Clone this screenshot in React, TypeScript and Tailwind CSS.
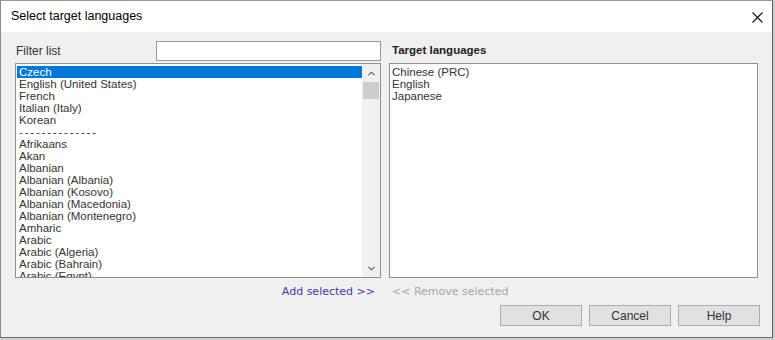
import { ChevronDown, ChevronUp } from 'lucide-react'

const sourceLangs = [
  'Czech',
  'English (United States)',
  'French',
  'Italian (Italy)',
  'Korean',
  '--------------',
  'Afrikaans',
  'Akan',
  'Albanian',
  'Albanian (Albania)',
  'Albanian (Kosovo)',
  'Albanian (Macedonia)',
  'Albanian (Montenegro)',
  'Amharic',
  'Arabic',
  'Arabic (Algeria)',
  'Arabic (Bahrain)',
  'Arabic (Egypt)',
]

const targetLangs = ['Chinese (PRC)', 'English', 'Japanese']

export default function App() {
  return (
    <div className="w-[775px] h-[340px] bg-[#cdcdcd] font-['Liberation_Sans',Arial,sans-serif] text-[#222] overflow-hidden">
      <div className="w-[773px] h-[338px] flex flex-col bg-[#f0f0f0] border-l border-l-[#8a8a8a] border-r border-r-[#5a5a5a] border-b border-b-[#707070] border-t border-t-[#9a9a9a]">
        {/* title bar */}
        <div className="h-[31px] bg-white flex items-center justify-between pl-[10px] pr-[9px]">
          <span className="text-[12.5px] text-black">Select target languages</span>
          <svg width="11" height="11" viewBox="0 0 11 11" className="mt-[1px]">
            <path d="M0.5 0.5 L10.5 10.5 M10.5 0.5 L0.5 10.5" stroke="#111" strokeWidth="1.1" fill="none" />
          </svg>
        </div>

        <div className="flex-1 pl-[14px] pr-[14px] pt-[9px]">
          <div className="flex gap-[8px]">
            {/* left column */}
            <div className="w-[366px] flex flex-col">
              <div className="h-[20px] flex items-center justify-between">
                <span className="text-[12px] text-[#333] pl-[1px]">Filter list</span>
                <input className="w-[225px] h-[20px] bg-white border border-[#9a9a9a] outline-none" />
              </div>
              <div className="mt-[2px] h-[215px] bg-white border border-[#8f8f8f] flex overflow-hidden">
                <div className="flex-1 pl-[1px] pt-[2px] text-[11.5px] leading-[12px] text-[#333]">
                  {sourceLangs.map((l, i) => (
                    <div
                      key={i}
                      className={`h-[12px] pl-[2px] whitespace-nowrap ${i === 0 ? 'bg-[#0078d7] text-white' : ''} ${l.startsWith('-') ? 'tracking-[1.8px]' : ''}`}
                    >
                      {l}
                    </div>
                  ))}
                </div>
                <div className="w-[18px] bg-[#f0f0f0] flex flex-col">
                  <div className="h-[18px] flex items-center justify-center">
                    <ChevronUp size={11} strokeWidth={2.5} color="#606060" />
                  </div>
                  <div className="mx-[1px] h-[17px] bg-[#cdcdcd]" />
                  <div className="flex-1" />
                  <div className="h-[18px] flex items-center justify-center">
                    <ChevronDown size={11} strokeWidth={2.5} color="#606060" />
                  </div>
                </div>
              </div>
            </div>

            {/* right column */}
            <div className="w-[369px] flex flex-col">
              <div className="h-[20px] flex items-center pl-[3px]">
                <span className="text-[11.5px] font-bold text-[#222]">Target languages</span>
              </div>
              <div className="mt-[2px] h-[215px] bg-white border border-[#8f8f8f] pt-[2px] pl-[2px] text-[11.5px] leading-[12px] text-[#333]">
                {targetLangs.map((l) => (
                  <div key={l} className="h-[12px] whitespace-nowrap">{l}</div>
                ))}
              </div>
            </div>
          </div>

          {/* links */}
          <div className="mt-[6px] h-[16px] flex gap-[8px] font-['DejaVu_Sans',Verdana,sans-serif] text-[11px]">
            <div className="w-[366px] flex justify-end pr-[6px]">
              <span className="text-[#3c3ca8]">Add selected &gt;&gt;</span>
            </div>
            <div className="pl-[3px]">
              <span className="text-[#a6a6a6]">&lt;&lt; Remove selected</span>
            </div>
          </div>

          {/* buttons */}
          <div className="mt-[5px] flex justify-end gap-[7px] -mr-[2px]">
            {['OK', 'Cancel', 'Help'].map((b) => (
              <button
                key={b}
                className="w-[82px] h-[21px] bg-[#e1e1e1] border border-[#adadad] text-[12px] text-[#333] flex items-center justify-center"
              >
                {b}
              </button>
            ))}
          </div>
        </div>
      </div>
    </div>
  )
}
